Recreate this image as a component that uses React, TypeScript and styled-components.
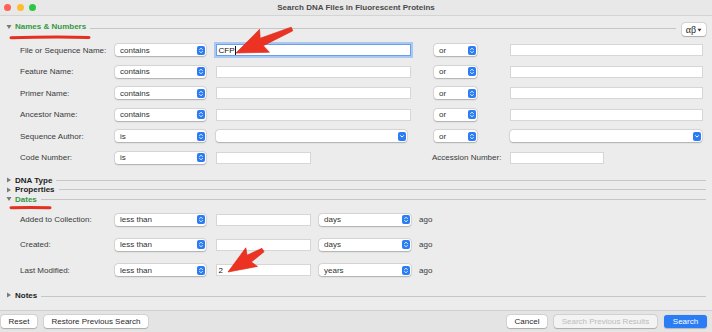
import React from "react";
import styled, {createGlobalStyle} from "styled-components";

const GlobalStyle = createGlobalStyle`
    html, body {
        margin: 0;
        padding: 0;
        background: #ececec;
    }
`;

const StyledWindow = styled.div`
    position: relative;
    width: 712px;
    height: 332px;
    overflow: hidden;
    display: flex;
    flex-direction: column;
    background: #ececec;
    font-family: "Liberation Sans", Arial, sans-serif;
    font-size: 8px;
    color: #3a3a3a;
`;

const StyledTitleBar = styled.div`
    height: 15px;
    display: grid;
    grid-template-columns: 1fr auto 1fr;
    align-items: center;
    padding: 0 4px;
    background: #e8e8e8;
    border-bottom: 1px solid #d4d4d4;
`;

const StyledLights = styled.div`
    display: flex;
    gap: 5.5px;
`;

const StyledLight = styled.div<{color: string}>`
    width: 7px;
    height: 7px;
    border-radius: 50%;
    background: ${props => props.color};
`;

const StyledTitle = styled.div`
    font-weight: bold;
    color: #4a4a4a;
`;

const StyledBody = styled.div`
    padding: 5px 6px 0 6px;
    display: flex;
    flex-direction: column;
`;

const StyledHeader = styled.div<{height: number; gap: number}>`
    display: flex;
    align-items: center;
    height: ${props => props.height}px;
    margin-top: ${props => props.gap}px;
`;

const StyledTriangle = styled.div`
    width: 9px;
    height: 9px;
    display: flex;
    align-items: center;
`;

const StyledHeaderTitle = styled.div<{open: boolean}>`
    font-weight: bold;
    color: ${props => props.open ? "#34993c" : "#1c1c1c"};
    padding-right: 4px;
    white-space: nowrap;
`;

const StyledRule = styled.div<{drop: number}>`
    flex: 1;
    height: 1px;
    background: #c6c6c6;
    margin-top: ${props => props.drop}px;
`;

const StyledCharButton = styled.div`
    align-self: flex-start;
    margin-top: 2px;
    margin-left: 6px;
    width: 24px;
    height: 13px;
    display: flex;
    align-items: center;
    justify-content: center;
    gap: 1px;
    background: #fff;
    border-radius: 3px;
    box-shadow: 0 0 0 0.5px rgba(0, 0, 0, 0.18), 0 0.5px 1px rgba(0, 0, 0, 0.2);
    font-family: "Liberation Serif", "Times New Roman", serif;
    font-size: 10px;
    color: #222;
`;

const StyledGrid = styled.div<{columns: string; rowGap: number; gap: number}>`
    display: grid;
    grid-template-columns: ${props => props.columns};
    grid-auto-rows: 12px;
    row-gap: ${props => props.rowGap}px;
    align-items: center;
    padding-left: 14px;
    margin-top: ${props => props.gap}px;
`;

const StyledLabel = styled.div<{shift?: number}>`
    white-space: nowrap;
    color: #3a3a3a;
    margin-left: ${props => props.shift || 0}px;
`;

const StyledPopUp = styled.div<{width: number}>`
    width: ${props => props.width}px;
    height: 12px;
    box-sizing: border-box;
    display: flex;
    align-items: center;
    justify-content: space-between;
    padding: 0 1.5px 0 5px;
    background: #fff;
    border-radius: 3px;
    box-shadow: 0 0 0 0.5px rgba(0, 0, 0, 0.12), 0 0.5px 1.5px rgba(0, 0, 0, 0.22);
    color: #333;
`;

const StyledChevron = styled.div`
    width: 8px;
    height: 9px;
    border-radius: 2px;
    background: #2c7cf5;
    display: flex;
`;

const StyledField = styled.div<{width: number; focused?: boolean}>`
    width: ${props => props.width}px;
    height: 12px;
    box-sizing: border-box;
    display: flex;
    align-items: center;
    padding-left: 1.5px;
    background: #fff;
    border: 0.5px solid ${props => props.focused ? "#6d9ee6" : "#d6d6d6"};
    box-shadow: ${props => props.focused ? "0 0 0 2px #a9c8f3" : "none"};
    color: #111;
`;

const StyledCaret = styled.span`
    display: inline-block;
    width: 1px;
    height: 9px;
    background: #111;
    margin-left: 0.5px;
`;

const StyledAgo = styled.div`
    color: #3a3a3a;
`;

const StyledFooter = styled.div`
    margin-top: auto;
    height: 21px;
    display: flex;
    align-items: center;
    gap: 7px;
    padding: 0 5px 0 1px;
    border-top: 1px solid #d0d0d0;
    background: #e4e4e4;
`;

const StyledButton = styled.div<{kind?: "primary" | "disabled"; width: number; push?: boolean}>`
    width: ${props => props.width}px;
    height: 13px;
    display: flex;
    align-items: center;
    justify-content: center;
    border-radius: 3px;
    margin-left: ${props => props.push ? "auto" : "0"};
    white-space: nowrap;
    background: ${props => props.kind === "primary" ? "#2a7df5" : props.kind === "disabled" ? "#f3f3f3" : "#fff"};
    color: ${props => props.kind === "primary" ? "#fff" : props.kind === "disabled" ? "#bbbbbb" : "#2a2a2a"};
    box-shadow: ${props => props.kind === "primary" ? "0 0.5px 1px rgba(0,0,0,0.2)" : "0 0 0 0.5px rgba(0,0,0,0.12), 0 0.5px 1px rgba(0,0,0,0.2)"};
`;

const StyledAnnotations = styled.svg`
    position: absolute;
    top: 0;
    left: 0;
    pointer-events: none;
`;

function Disclosure({open}: {open: boolean}) {
    return (
        <StyledTriangle>
            <svg width="6" height="6" viewBox="0 0 6 6">
                {open
                    ? <path d="M0.5 1 L5.5 1 L3 5 Z" fill="#7a7a7a"/>
                    : <path d="M1 0.5 L5 3 L1 5.5 Z" fill="#7a7a7a"/>}
            </svg>
        </StyledTriangle>
    );
}

function PopUp({width, value, single}: {width: number; value: string; single?: boolean}) {
    return (
        <StyledPopUp width={width}>
            <span>{value}</span>
            <StyledChevron>
                <svg width="8" height="9" viewBox="0 0 8 9">
                    {single
                        ? <path d="M2.5 3.6 L4 5.1 L5.5 3.6" stroke="#fff" strokeWidth="1" fill="none" strokeLinecap="round"/>
                        : <>
                            <path d="M2.6 3.6 L4 2.2 L5.4 3.6" stroke="#fff" strokeWidth="0.9" fill="none" strokeLinecap="round"/>
                            <path d="M2.6 5.4 L4 6.8 L5.4 5.4" stroke="#fff" strokeWidth="0.9" fill="none" strokeLinecap="round"/>
                        </>}
                </svg>
            </StyledChevron>
        </StyledPopUp>
    );
}

function Arrow({tailX, tailY, tipX, tipY, head, wing}: {tailX: number; tailY: number; tipX: number; tipY: number; head: number; wing: number}) {
    const length = Math.hypot(tipX - tailX, tipY - tailY);
    const angle = Math.atan2(tipY - tailY, tipX - tailX) * 180 / Math.PI;
    const base = length - head;
    const points = [
        [0, -2], [base, -4], [base - 3, -wing / 2], [length, 0],
        [base - 3, wing / 2], [base, 4], [0, 2],
    ].map(p => p.join(",")).join(" ");
    return (
        <polygon
            points={points}
            transform={`translate(${tailX} ${tailY}) rotate(${angle})`}
            fill="#ec3323"
            stroke="#d92a1b"
            strokeWidth="0.6"
            strokeLinejoin="round"
        />
    );
}

const nameRows = [
    {label: "File or Sequence Name:", op: "contains", value: "CFP", focused: true},
    {label: "Feature Name:", op: "contains"},
    {label: "Primer Name:", op: "contains"},
    {label: "Ancestor Name:", op: "contains"},
];

const dateRows = [
    {label: "Added to Collection:", unit: "days", value: ""},
    {label: "Created:", unit: "days", value: ""},
    {label: "Last Modified:", unit: "years", value: "2"},
];

export default function App() {
    return (
        <StyledWindow>
            <GlobalStyle/>
            <StyledTitleBar>
                <StyledLights>
                    <StyledLight color="#fe5f57"/>
                    <StyledLight color="#febc2e"/>
                    <StyledLight color="#28c840"/>
                </StyledLights>
                <StyledTitle>Search DNA Files in Fluorescent Proteins</StyledTitle>
                <div/>
            </StyledTitleBar>

            <StyledBody>
                <StyledHeader height={11} gap={0}>
                    <Disclosure open/>
                    <StyledHeaderTitle open>Names &amp; Numbers</StyledHeaderTitle>
                    <StyledRule drop={3}/>
                    <StyledCharButton>
                        <span>αβ</span>
                        <svg width="5" height="4" viewBox="0 0 5 4"><path d="M0.5 0.8 L4.5 0.8 L2.5 3.4 Z" fill="#333"/></svg>
                    </StyledCharButton>
                </StyledHeader>

                <StyledGrid columns="95px 101px 218px 76px 193px" rowGap={9.5} gap={12}>
                    {nameRows.map(row => (
                        <React.Fragment key={row.label}>
                            <StyledLabel>{row.label}</StyledLabel>
                            <PopUp width={91} value={row.op}/>
                            <StyledField width={195} focused={row.focused}>
                                {row.value}{row.focused && <StyledCaret/>}
                            </StyledField>
                            <PopUp width={43} value="or"/>
                            <StyledField width={193}/>
                        </React.Fragment>
                    ))}
                    <StyledLabel>Sequence Author:</StyledLabel>
                    <PopUp width={91} value="is"/>
                    <PopUp width={191} value="" single/>
                    <PopUp width={43} value="or"/>
                    <PopUp width={192} value="" single/>

                    <StyledLabel>Code Number:</StyledLabel>
                    <PopUp width={91} value="is"/>
                    <StyledField width={95}/>
                    <StyledLabel shift={-2}>Accession Number:</StyledLabel>
                    <StyledField width={94}/>
                </StyledGrid>

                <StyledHeader height={9.5} gap={12}>
                    <Disclosure open={false}/>
                    <StyledHeaderTitle open={false}>DNA Type</StyledHeaderTitle>
                    <StyledRule drop={0}/>
                </StyledHeader>
                <StyledHeader height={9.5} gap={0}>
                    <Disclosure open={false}/>
                    <StyledHeaderTitle open={false}>Properties</StyledHeaderTitle>
                    <StyledRule drop={0}/>
                </StyledHeader>
                <StyledHeader height={9.5} gap={0}>
                    <Disclosure open/>
                    <StyledHeaderTitle open>Dates</StyledHeaderTitle>
                    <StyledRule drop={0}/>
                </StyledHeader>

                <StyledGrid columns="95px 101px 103px 100px auto" rowGap={13.3} gap={9.5}>
                    {dateRows.map(row => (
                        <React.Fragment key={row.label}>
                            <StyledLabel>{row.label}</StyledLabel>
                            <PopUp width={91} value="less than"/>
                            <StyledField width={95}>{row.value}</StyledField>
                            <PopUp width={92} value={row.unit}/>
                            <StyledAgo>ago</StyledAgo>
                        </React.Fragment>
                    ))}
                </StyledGrid>

                <StyledHeader height={9.5} gap={14.3}>
                    <Disclosure open={false}/>
                    <StyledHeaderTitle open={false}>Notes</StyledHeaderTitle>
                    <StyledRule drop={2}/>
                </StyledHeader>
            </StyledBody>

            <StyledFooter>
                <StyledButton width={36}>Reset</StyledButton>
                <StyledButton width={104}>Restore Previous Search</StyledButton>
                <StyledButton width={40} push>Cancel</StyledButton>
                <StyledButton width={103} kind="disabled">Search Previous Results</StyledButton>
                <StyledButton width={43} kind="primary">Search</StyledButton>
            </StyledFooter>

            <StyledAnnotations width="712" height="332" viewBox="0 0 712 332">
                <path d="M11 37.8 Q50 36.6 89 37.4" stroke="#e5301f" strokeWidth="3" fill="none" strokeLinecap="round"/>
                <path d="M11 207.8 Q30 207 50 207.8" stroke="#e5301f" strokeWidth="3" fill="none" strokeLinecap="round"/>
                <Arrow tailX={292} tailY={29} tipX={236} tipY={53} head={28} wing={25}/>
                <Arrow tailX={263} tailY={250} tipX={228} tipY={272} head={25} wing={22}/>
            </StyledAnnotations>
        </StyledWindow>
    );
}
